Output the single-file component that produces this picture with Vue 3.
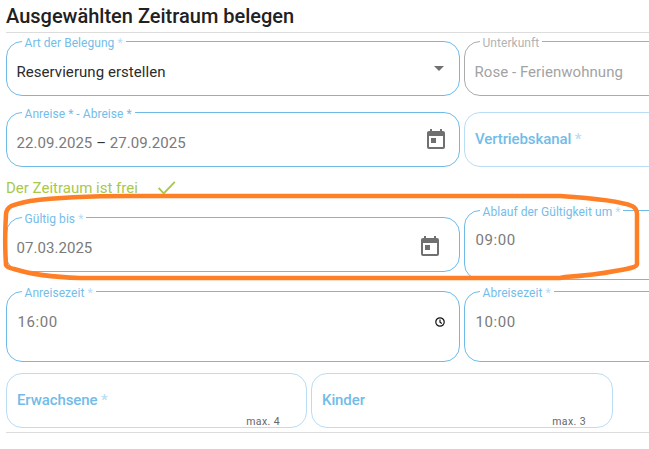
<template>
  <div class="page">
    <h1 class="title">Ausgewählten Zeitraum belegen</h1>
    <hr class="rule" />

    <div class="row row-first">
      <fieldset class="field wide h62">
        <legend>Art der Belegung <i>*</i></legend>
        <div class="value dark">Reservierung erstellen</div>
        <svg class="icon caret" viewBox="0 0 24 24"><path d="M7 10l5 5 5-5z" /></svg>
      </fieldset>
      <fieldset class="field side h62 off">
        <legend>Unterkunft</legend>
        <div class="value">Rose - Ferienwohnung</div>
      </fieldset>
    </div>

    <div class="row row-second">
      <fieldset class="field wide h62">
        <legend>Anreise <b>*</b> - Abreise <b>*</b></legend>
        <div class="value">22.09.2025 <span class="dash">–</span> 27.09.2025</div>
        <svg class="icon" viewBox="0 0 24 24"><path :d="calendarPath" /></svg>
      </fieldset>
      <div class="field-empty side">Vertriebskanal <i>*</i></div>
    </div>

    <div class="status">
      <span>Der Zeitraum ist frei</span>
      <svg class="check" viewBox="0 0 24 24"><path d="M2 12.5l6.5 7L22.500 5" /></svg>
    </div>

    <div class="row row-third">
      <fieldset class="field wide h62 lower">
        <legend>Gültig bis <i>*</i></legend>
        <div class="value">07.03.2025</div>
        <svg class="icon until" viewBox="0 0 24 24"><path :d="calendarPath" /></svg>
      </fieldset>
      <fieldset class="field side h77">
        <legend>Ablauf der Gültigkeit um <i>*</i></legend>
        <div class="value time">09:00</div>
      </fieldset>
    </div>

    <div class="row row-fourth">
      <fieldset class="field wide h78">
        <legend>Anreisezeit <i>*</i></legend>
        <div class="value time lower-time">16:00</div>
        <svg class="clock" viewBox="0 0 12 12"><circle cx="6" cy="6" r="4.2" /><path d="M6 3.500V6.200l1.800 1.300" /></svg>
      </fieldset>
      <fieldset class="field side h78">
        <legend>Abreisezeit <i>*</i></legend>
        <div class="value time lower-time">10:00</div>
      </fieldset>
    </div>

    <div class="row row-fifth">
      <div v-for="g in guests" :key="g.label" class="field-empty guest">
        {{ g.label }} <i v-if="g.required">*</i>
        <small>{{ g.hint }}</small>
      </div>
    </div>
    <hr class="rule rule-end" />

    <svg class="marker" viewBox="0 0 649 449">
      <path d="M6 265C5 250 5 230 6 214C7 206 11 205 30 201C60 197 90 196 130 196H560C590 198 620 201 632 206C636 208 637 210 637 214V264C637 267 632 268 615 271C600 274 580 276 565 277L560 278H80C50 277 30 274 14 269C9 268 7 267 6 265Z" />
    </svg>
  </div>
</template>

<script setup>
const calendarPath =
  'M7,10H12V15H7M19,19H5V8H19M19,3H18V1H16V3H8V1H6V3H5C3.89,3 3,3.9 3,5V19A2,2 0 0,0 5,21H19A2,2 0 0,0 21,19V5A2,2 0 0,0 19,3Z'

const guests = [
  { label: 'Erwachsene', required: true, hint: 'max. 4' },
  { label: 'Kinder', required: false, hint: 'max. 3' }
]
</script>

<style>
html, body {
  margin: 0;
  background: #fff;
  overflow: hidden;
}
</style>

<style scoped>
.page {
  position: relative;
  width: 649px;
  height: 449px;
  padding-left: 6px;
  box-sizing: border-box;
  overflow: hidden;
  font-family: Roboto, sans-serif;
}

.title {
  margin: 0;
  padding-top: 4px;
  height: 28px;
  box-sizing: border-box;
  font-size: 20px;
  line-height: 24px;
  font-weight: 500;
  color: #212121;
  white-space: nowrap;
}

.rule {
  margin: 4px 0 0;
  width: 700px;
  border: 0;
  border-top: 1px solid #dcdcdc;
}

.rule-end {
  margin-top: 4px;
}

.row {
  display: flex;
  gap: 4px;
  width: 800px;
  align-items: flex-start;
}

.row-first { margin-top: 1px; }
.row-second { margin-top: 9px; }
.row-third { margin-top: 5px; }
.row-fourth { margin-top: 4px; }
.row-fifth { margin-top: 11px; }

.field {
  position: relative;
  margin: 0;
  padding: 0 9.500px;
  box-sizing: border-box;
  min-width: 0;
  border: 1px solid #6fbbe8;
  border-radius: 16px;
  color: #7a7a7a;
}

.wide { width: 454px; }
.side { width: 300px; }
.h62 { height: 62px; }
.h77 { height: 77px; }
.h78 { height: 78px; }
.lower { margin-top: 7px; }

legend {
  position: relative;
  top: 2px;
  margin-left: 5px;
  padding: 0 3px;
  font-size: 12px;
  line-height: 14px;
  letter-spacing: 0.05px;
  color: #74bdea;
  white-space: nowrap;
}

legend i,
legend b {
  font-style: normal;
  font-weight: 400;
}

legend i {
  color: #b9ddf5;
}

.value {
  margin-top: 12px;
  font-size: 15px;
  line-height: 24px;
  letter-spacing: 0.05px;
  white-space: nowrap;
}

.value.dark {
  color: #2b2b2b;
}

.value.time {
  margin-top: 11px;
  padding-left: 1px;
  letter-spacing: 0.6px;
}

.value.lower-time {
  margin-top: 12px;
}

.dash {
  color: #333;
}

.off {
  border-color: #ababab;
  color: #a3a3a3;
}

.off legend {
  color: #b3b3b3;
}

.icon {
  position: absolute;
  top: 9px;
  right: 11px;
  width: 24px;
  height: 24px;
  fill: #707070;
}

.caret {
  top: 8px;
  right: 8px;
}

.until {
  top: 11px;
  right: 17px;
}

.clock {
  position: absolute;
  top: 18px;
  right: 13px;
  width: 12px;
  height: 12px;
  fill: none;
  stroke: #111;
  stroke-width: 1.2;
}

.field-empty {
  position: relative;
  height: 55px;
  padding: 14px 10px 0;
  box-sizing: border-box;
  border: 1px solid #b9ddf5;
  border-radius: 16px;
  font-size: 15px;
  line-height: 24px;
  font-weight: 500;
  letter-spacing: -0.1px;
  color: #72bce8;
  white-space: nowrap;
}

.row-second .field-empty {
  margin-top: 7px;
}

.field-empty i {
  font-style: normal;
  color: #b9ddf5;
}

.guest {
  width: 301px;
}

.guest + .guest {
  width: 302px;
}

.guest small {
  position: absolute;
  right: 26px;
  bottom: -2px;
  font-size: 10.500px;
  line-height: 14px;
  font-weight: 400;
  letter-spacing: 0.4px;
  color: #666;
}

.status {
  display: flex;
  align-items: center;
  gap: 19px;
  height: 21px;
  margin-top: 10px;
  font-size: 15px;
  color: #a8c84a;
}

.check {
  width: 19px;
  height: 19px;
  fill: none;
  stroke: #a8c84a;
  stroke-width: 2.300;
}

.marker {
  position: absolute;
  inset: 0;
  width: 649px;
  height: 449px;
  fill: none;
  stroke: #ff7f27;
  stroke-width: 4.500;
  pointer-events: none;
}
</style>
